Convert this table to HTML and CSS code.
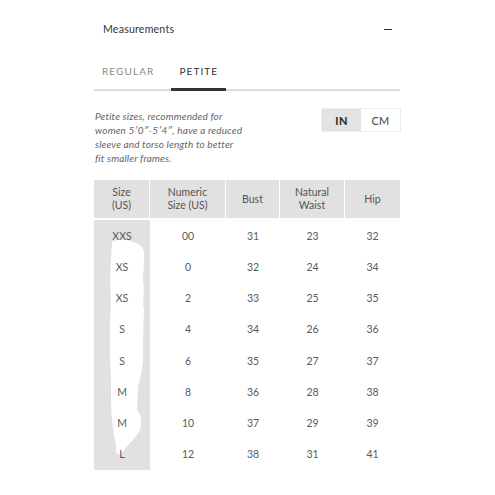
FILE: index.html
```html
<!DOCTYPE html>
<html>
<head>
<meta charset="utf-8">
<link rel="stylesheet" href="styles.css">
</head>
<body>
<div class="panel">
  <div class="acc-head">
    <span class="acc-title">Measurements</span>
    <span class="acc-minus"></span>
  </div>
  <div class="tabs">
    <span class="tab">REGULAR</span>
    <span class="tab active">PETITE</span>
  </div>
  <div class="intro">
    <p class="intro-text">Petite sizes, recommended for<br>women 5′0″-5′4″, have a reduced<br>sleeve and torso length to better<br>fit smaller frames.</p>
    <div class="toggle">
      <span class="unit on">IN</span>
      <span class="unit">CM</span>
    </div>
  </div>
  <div class="chart">
    <div class="row head">
      <div class="cell">Size<br>(US)</div>
      <div class="cell">Numeric<br>Size (US)</div>
      <div class="cell">Bust</div>
      <div class="cell">Natural<br>Waist</div>
      <div class="cell">Hip</div>
    </div>
    <div class="body">
      <div class="row"><div class="cell size"><span>XXS</span></div><div class="cell">00</div><div class="cell">31</div><div class="cell">23</div><div class="cell">32</div></div>
      <div class="row"><div class="cell size"><span>XS</span></div><div class="cell">0</div><div class="cell">32</div><div class="cell">24</div><div class="cell">34</div></div>
      <div class="row"><div class="cell size"><span>XS</span></div><div class="cell">2</div><div class="cell">33</div><div class="cell">25</div><div class="cell">35</div></div>
      <div class="row"><div class="cell size"><span>S</span></div><div class="cell">4</div><div class="cell">34</div><div class="cell">26</div><div class="cell">36</div></div>
      <div class="row"><div class="cell size"><span>S</span></div><div class="cell">6</div><div class="cell">35</div><div class="cell">27</div><div class="cell">37</div></div>
      <div class="row"><div class="cell size"><span>M</span></div><div class="cell">8</div><div class="cell">36</div><div class="cell">28</div><div class="cell">38</div></div>
      <div class="row"><div class="cell size"><span>M</span></div><div class="cell">10</div><div class="cell">37</div><div class="cell">29</div><div class="cell">39</div></div>
      <div class="row"><div class="cell size"><span>L</span></div><div class="cell">12</div><div class="cell">38</div><div class="cell">31</div><div class="cell">41</div></div>
    </div>
    <svg class="blob" width="306" height="290" viewBox="0 0 306 290">
      <path fill="#fff" d="M18 62 C24 58 36 60 42 63 C48 65 51 70 50 78 L49 100 C51 110 48 120 50 130 L49 160 C50 180 48 195 44 205 L43 230 C48 235 48 245 46 250 C43 257 36 262 30 270 C28 275 24 276 22 272 C23 265 21 260 20 255 L18 240 C16 220 18 200 16 180 L16 140 C18 120 15 100 17 80 Z"/>
    </svg>
  </div>
</div>
</body>
</html>
```
FILE: styles.css
```css
html, body { margin: 0; padding: 0; background: #fff; }
body { font-family: Lato, "Open Sans", sans-serif; color: #444; }
.panel { width: 306px; margin-left: 94px; }
.acc-head {
  display: flex; justify-content: space-between; align-items: center;
  padding: 21px 8px 13px 9px; height: 16px;
}
.acc-title { font-size: 10.6px; color: #333; line-height: 16px; letter-spacing: 0.2px; }
.acc-minus { width: 8px; height: 1px; background: #333; }
.tabs {
  display: flex; height: 41px; box-sizing: border-box;
  box-shadow: inset 0 -2px 0 #dcdcdc;
}
.tab {
  font-size: 10px; letter-spacing: 1.1px; line-height: 14px;
  padding: 14px 8px 10px; color: #8a8a8a; box-sizing: border-box; height: 41px;
}
.tab + .tab { margin-left: 9px; }
.tab.active { color: #333; border-bottom: 3px solid #333; }
.intro { display: flex; justify-content: space-between; align-items: flex-start; margin-top: 17px; }
.intro-text {
  margin: 1px 0 0 1px; font-size: 10px; font-style: italic; line-height: 14px; color: #666;
  letter-spacing: 0.15px;
}
.toggle { display: flex; border: 1px solid #eeeeee; margin-right: -1px; }
.unit {
  width: 39px; height: 22px; display: flex; align-items: center; justify-content: center;
  font-size: 11px; color: #444; background: #fff; letter-spacing: 0.3px;
}
.unit.on { background: #e3e3e3; font-weight: 700; color: #222; }
.chart { position: relative; margin-top: 15px; }
.row { display: grid; grid-template-columns: 56px 76px 54px 65px 55px; }
.row.head { height: 38px; margin-bottom: 2px; }
.head .cell {
  background: #e1e1e1; border-right: 1px solid #fff; line-height: 13px;
  font-size: 10.5px; color: #555;
}
.head .cell:last-child { border-right: 0; }
.cell {
  display: flex; align-items: center; justify-content: center; text-align: center;
  font-size: 10.5px; color: #5a5a5a;
}
.body .row { height: 31.25px; }
.cell.size { background: #e1e1e1; }
.cell.size span { position: relative; z-index: 2; }
.blob { position: absolute; left: 0; top: 0; z-index: 1; }
```
